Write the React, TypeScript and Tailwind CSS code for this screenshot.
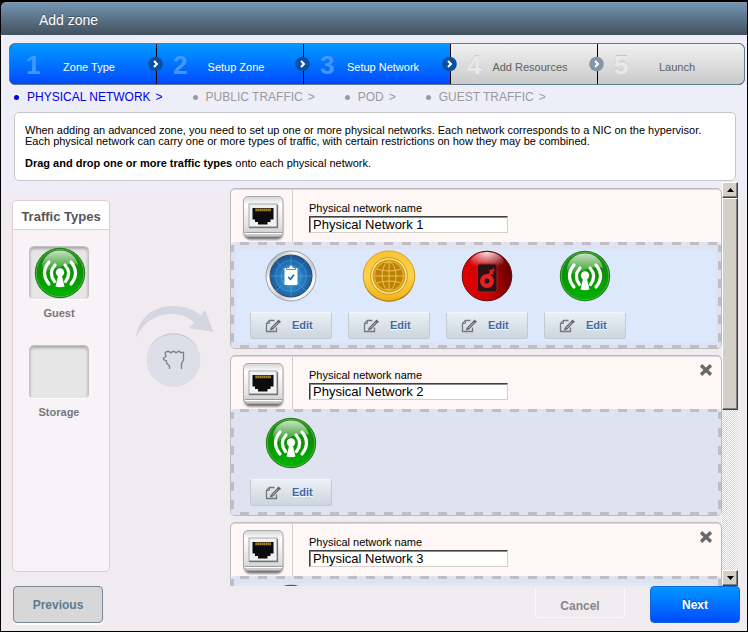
import { useState } from "react";
import clsx from "clsx";

type TrafficType = "management" | "public" | "storage" | "guest";

interface PhysicalNetwork {
  id: number;
  name: string;
  active: boolean;
  removable: boolean;
  traffic: TrafficType[];
}

const STEPS = ["Zone Type", "Setup Zone", "Setup Network", "Add Resources", "Launch"];
const CURRENT_STEP = 2;

const SUB_STEPS = ["PHYSICAL NETWORK", "PUBLIC TRAFFIC", "POD", "GUEST TRAFFIC"];

const INITIAL_NETWORKS: PhysicalNetwork[] = [
  {
    id: 1,
    name: "Physical Network 1",
    active: true,
    removable: false,
    traffic: ["management", "public", "storage", "guest"],
  },
  { id: 2, name: "Physical Network 2", active: false, removable: true, traffic: ["guest"] },
  { id: 3, name: "Physical Network 3", active: true, removable: true, traffic: ["guest"] },
];

function GuestIcon() {
  return (
    <svg viewBox="0 0 52 52" className="block size-[52px]" aria-hidden="true">
      <defs>
        <linearGradient id="guest-fill" x1="0" y1="0" x2="0" y2="1">
          <stop offset="0" stopColor="#1f8a12" />
          <stop offset="0.5" stopColor="#0a9400" />
          <stop offset="1" stopColor="#00b400" />
        </linearGradient>
        <linearGradient id="guest-shine" x1="0" y1="0" x2="0" y2="1">
          <stop offset="0" stopColor="#ffffff" stopOpacity="0.75" />
          <stop offset="1" stopColor="#ffffff" stopOpacity="0.08" />
        </linearGradient>
      </defs>
      <circle cx="26" cy="26" r="25.2" fill="#1c7a12" />
      <circle cx="26" cy="26" r="23.8" fill="url(#guest-fill)" stroke="#62b457" strokeWidth="0.8" />
      <path d="M8 18C10 8 18 3.6 26 3.6S42 8 44 18C36 14 20 23 10 25Z" fill="url(#guest-shine)" />
      <g fill="none" stroke="#fff" strokeWidth="3.2" strokeLinecap="round">
        <path d="M15 15Q6 26 15 37" />
        <path d="M21 18Q14 26 20.500 34.500" />
        <path d="M37 15Q46 26 37 37" />
        <path d="M31 18Q38 26 31.500 34.500" />
      </g>
      <circle cx="26" cy="25.500" r="4.2" fill="#fff" />
      <path d="M24.500 27H27.500L30.500 39.500Q26 41 21.500 39.500Z" fill="#fff" />
    </svg>
  );
}

function ManagementIcon() {
  return (
    <svg viewBox="0 0 52 52" className="block size-[52px]" aria-hidden="true">
      <defs>
        <linearGradient id="mgmt-ring" x1="0" y1="0" x2="1" y2="1">
          <stop offset="0" stopColor="#777b80" />
          <stop offset="0.3" stopColor="#fafafa" />
          <stop offset="0.6" stopColor="#c9cbd0" />
          <stop offset="0.8" stopColor="#ffffff" />
          <stop offset="1" stopColor="#6c6f74" />
        </linearGradient>
        <radialGradient id="mgmt-fill" cx="0.5" cy="0.55" r="0.55">
          <stop offset="0" stopColor="#3a9fdb" />
          <stop offset="0.6" stopColor="#2574b8" />
          <stop offset="1" stopColor="#175391" />
        </radialGradient>
      </defs>
      <circle cx="26" cy="26" r="25" fill="url(#mgmt-ring)" stroke="#8a8e93" strokeWidth="0.8" />
      <circle cx="26" cy="26" r="21" fill="url(#mgmt-fill)" stroke="#31445c" strokeWidth="1" />
      <g fill="none" stroke="#6bc2ee" strokeWidth="0.6" opacity="0.6">
        <circle cx="26" cy="26" r="10" />
        <circle cx="26" cy="26" r="15.500" />
        <path d="M26 5V47M5 26H47M11 11L41 41M41 11L11 41" />
      </g>
      <rect x="19.500" y="18" width="13" height="17" rx="0.8" fill="#fff" />
      <path d="M21.500 19.500V17.500H24Q24 15 26 15T28 17.500H30.500V19.500Z" fill="#fff" stroke="#2c78b9" strokeWidth="0.8" />
      <path d="M23.300 27L25.500 29.300L29 24.800" fill="none" stroke="#1c68ad" strokeWidth="1.7" />
    </svg>
  );
}

function PublicIcon() {
  return (
    <svg viewBox="0 0 54 52" className="block h-[52px] w-[54px]" aria-hidden="true">
      <defs>
        <linearGradient id="public-fill" x1="0" y1="0" x2="0" y2="1">
          <stop offset="0" stopColor="#f8c233" />
          <stop offset="0.5" stopColor="#ffd24c" />
          <stop offset="1" stopColor="#f0b21c" />
        </linearGradient>
      </defs>
      <ellipse cx="27" cy="26.500" rx="26" ry="25.300" fill="#9a6d07" />
      <ellipse cx="27" cy="25.700" rx="25.800" ry="24.900" fill="url(#public-fill)" stroke="#d69b12" strokeWidth="0.8" />
      <circle cx="27" cy="26" r="18.300" fill="#fff0a0" stroke="#cc9313" strokeWidth="1" />
      <circle cx="27" cy="26" r="16.500" fill="#d49b13" />
      <circle cx="27" cy="26" r="14.500" fill="#bd8107" stroke="#f0c348" strokeWidth="0.8" />
      <g fill="none" stroke="#f7d05a" strokeWidth="0.8">
        <path d="M27 12V40M13 26H41M15 19Q27 23 39 19M15 33Q27 29 39 33" />
        <ellipse cx="27" cy="26" rx="7" ry="14" />
      </g>
    </svg>
  );
}

function StorageIcon() {
  return (
    <svg viewBox="0 0 52 52" className="block size-[52px]" aria-hidden="true">
      <defs>
        <linearGradient id="storage-fill" x1="0" y1="0.6" x2="1" y2="0.4">
          <stop offset="0" stopColor="#e60000" />
          <stop offset="0.5" stopColor="#c80000" />
          <stop offset="1" stopColor="#5e0000" />
        </linearGradient>
        <radialGradient id="storage-shine" cx="0.5" cy="0" r="0.75">
          <stop offset="0" stopColor="#fff" stopOpacity="0.9" />
          <stop offset="1" stopColor="#fff" stopOpacity="0" />
        </radialGradient>
      </defs>
      <circle cx="26" cy="26" r="24.800" fill="url(#storage-fill)" stroke="#640a0a" strokeWidth="1" />
      <ellipse cx="26" cy="13" rx="17" ry="11" fill="url(#storage-shine)" />
      <rect x="16.500" y="14" width="19.500" height="28" rx="2.500" fill="#2c1013" stroke="#8e2a2a" strokeWidth="1" />
      <circle cx="26" cy="31" r="7" fill="#e32222" />
      <circle cx="26" cy="31" r="2.500" fill="#2c1013" />
      <path d="M27.500 25.500L33 19M29 20L32 24.500" stroke="#e32222" strokeWidth="2" fill="none" />
    </svg>
  );
}

const TRAFFIC_ICONS: Record<TrafficType, () => React.JSX.Element> = {
  management: ManagementIcon,
  public: PublicIcon,
  storage: StorageIcon,
  guest: GuestIcon,
};

function PortIcon() {
  return (
    <svg viewBox="0 0 44 48" className="block h-12 w-11" aria-hidden="true">
      <defs>
        <linearGradient id="port-frame" x1="0" y1="0" x2="0" y2="1">
          <stop offset="0" stopColor="#d2d2d3" />
          <stop offset="0.2" stopColor="#ffffff" />
          <stop offset="0.8" stopColor="#dededf" />
          <stop offset="1" stopColor="#c4c4c6" />
        </linearGradient>
        <filter id="port-blur" x="-20%" y="-20%" width="140%" height="140%">
          <feGaussianBlur stdDeviation="1.3" />
        </filter>
      </defs>
      <rect x="3.500" y="6" width="38" height="38.500" rx="5" fill="#5a5558" opacity="0.85" filter="url(#port-blur)" />
      <rect x="2.500" y="1.500" width="39.500" height="40" rx="4.500" fill="url(#port-frame)" stroke="#a9a9ab" strokeWidth="1" />
      <path d="M4 37.500H41" stroke="#8f8f92" strokeWidth="0.8" />
      <path d="M4 38.500H41" stroke="#fff" strokeWidth="1" />
      <rect x="8" y="9" width="28" height="23" fill="#f0f0f1" stroke="#a8a8ab" strokeWidth="1" />
      <path d="M8 32.500H36.500V10" fill="none" stroke="#77777b" strokeWidth="1.300" />
      <path d="M11.500 13H32.500V24.500H29.500V27H26.500V29.500H17V27H14V24.500H11.500Z" fill="#0c0c0e" />
      <path d="M14.500 14.800H30" stroke="#e0b53e" strokeWidth="2.800" strokeDasharray="1.200 0.800" />
    </svg>
  );
}

function EditIcon() {
  return (
    <svg viewBox="0 0 17 14" className="block h-3.5 w-[17px]" fill="none" aria-hidden="true">
      <path d="M9.500 1.500H4.500L1.500 4.500V12.500H11.500V8.500" stroke="#74787c" strokeWidth="1.300" />
      <path d="M4.500 1.500V4.500H1.500" stroke="#74787c" strokeWidth="0.900" />
      <path d="M7 9.500L14 2.200" stroke="#5a5e62" strokeWidth="2.800" />
      <path d="M7.500 9L13 3.300" stroke="#d4dae0" strokeWidth="0.900" />
      <path d="M5 11.500L5.800 8.500L8 10.500Z" fill="#5a5e62" />
      <path d="M13 1L15.500 3.200" stroke="#5a5e62" strokeWidth="1.200" />
    </svg>
  );
}

function CloseIcon() {
  return (
    <svg viewBox="0 0 12 12" className="block size-3" aria-hidden="true">
      <path d="M2.300 2.500L9.700 9.500M9.700 2.500L2.300 9.500" stroke="#68696c" strokeWidth="3.400" strokeLinecap="square" />
    </svg>
  );
}

function DragHint() {
  return (
    <svg viewBox="0 0 80 84" className="block h-[84px] w-20" aria-hidden="true">
      <path
        d="M0 33C2 12 18 1 37 1C48 1 58 4.500 65 10.500L69 5L77.500 27L53 23L58.500 17.500C53 12.500 46 9.500 37 9C20 8.500 7 17 0 33Z"
        fill="#d5d6df"
      />
      <circle cx="37.500" cy="55" r="27" fill="#dddee7" />
      <path d="M13 44A27 27 0 0 1 62 44A28 28 0 0 0 13 44Z" fill="#c8cad5" />
      <path
        d="M33.500 64V61L30.500 58V56L27.500 54.500V53L30 51.500L29 48L31 46.500H33L35 48L36.500 46.500H38.500L40 48L42 46.500H43.500L44.500 47.500H47.500V55L45.500 58.500V64"
        fill="none"
        stroke="#7f8186"
        strokeWidth="1.300"
      />
    </svg>
  );
}

function StepArrow({ done }: { done: boolean }) {
  return (
    <svg
      viewBox="0 0 16 16"
      className="absolute -right-2 top-1/2 z-10 size-4 -translate-y-1/2"
      aria-hidden="true"
    >
      <circle cx="7.500" cy="8" r="7.300" fill={done ? "#0b4fa0" : "#8495a6"} />
      <path d="M6 5L9 8L6 11" fill="none" stroke="#fff" strokeWidth="2" />
    </svg>
  );
}

function WizardSteps() {
  return (
    <ol className="mr-0.5 ml-2 flex h-[42px] rounded-md border border-[#5f7b8c] bg-black">
      {STEPS.map((label, i) => {
        const done = i <= CURRENT_STEP;
        const last = i === STEPS.length - 1;
        return (
          <li
            key={label}
            className={clsx(
              "relative flex flex-1 items-center",
              i === 0 && "rounded-l-[5px]",
              last ? "rounded-r-[5px]" : "border-r border-black",
              done
                ? "bg-linear-to-b from-[#0d97ff] to-[#0048ff] text-white"
                : "bg-linear-to-b from-[#f1f1f1] to-[#cbcacb] text-[#5f6164]"
            )}
          >
            <span
              className={clsx(
                "w-8 pt-0.5 pl-4 text-[26px] leading-10 font-bold",
                done ? "text-[#4398ff]" : "text-[#eae8ea] [text-shadow:0_-1px_0_#c9c4c6]"
              )}
            >
              {i + 1}
            </span>
            <span className="flex-1 pt-1.5 pr-5 text-center text-[11px] whitespace-nowrap">
              {label}
            </span>
            {!last && <StepArrow done={done} />}
          </li>
        );
      })}
    </ol>
  );
}

function SubSteps() {
  return (
    <ul className="flex gap-[29px] px-3 pt-1 text-xs whitespace-nowrap">
      {SUB_STEPS.map((label, i) => (
        <li
          key={label}
          className={clsx("flex items-center", i === 0 ? "text-[#0000e8]" : "text-[#9a9a9c]")}
        >
          <span className="mr-2 ml-px size-[5px] rounded-full bg-current" />
          <span>{label}</span>
          <span className="ml-[5px]">&gt;</span>
        </li>
      ))}
    </ul>
  );
}

function TrafficItem({ type }: { type: TrafficType }) {
  const Icon = TRAFFIC_ICONS[type];
  return (
    <li className="flex w-[82px] flex-col items-center gap-[10px]">
      <Icon />
      <button
        type="button"
        className="flex h-[27px] w-full items-center rounded-[3px] border border-[#c6cacf] border-t-[#f4f7fa] bg-linear-to-b from-[#ebf0f4] to-[#ccd6de] pl-3.5 text-[11px] font-bold text-[#3f69a8] [text-shadow:0_1px_0_#fff]"
      >
        <EditIcon />
        <span className="ml-2.5">Edit</span>
      </button>
    </li>
  );
}

interface NetworkCardProps {
  network: PhysicalNetwork;
  onRename: (name: string) => void;
  onRemove: () => void;
}

function NetworkCard({ network, onRename, onRemove }: NetworkCardProps) {
  const inputId = `network-name-${network.id}`;

  return (
    <section className="shrink-0 rounded-[5px] border border-[#bdbbbf] bg-[#fff6f6] shadow-[inset_0_1px_0_#dcd7da]">
      <div className="flex h-[53px]">
        <div className="flex w-[62px] justify-center border-r border-[#d3cccf] pt-1.5 pl-0.5">
          <PortIcon />
        </div>
        <div className="flex-1 pt-3 pl-4">
          <label htmlFor={inputId} className="block text-[11px] leading-[15px] text-black">
            Physical network name
          </label>
          <input
            id={inputId}
            type="text"
            value={network.name}
            onChange={(e) => onRename(e.target.value)}
            className="block h-[17px] w-[199px] border border-[#d4d0c8] border-t-[#404040] border-l-[#404040] bg-white px-[3px] text-[13px] leading-[15px] text-black shadow-[inset_1px_1px_0_#8a8a8a] outline-none"
          />
        </div>
        {network.removable && (
          <button
            type="button"
            aria-label="Remove physical network"
            onClick={onRemove}
            className="mt-2 mr-[9px] size-3"
          >
            <CloseIcon />
          </button>
        )}
      </div>

      {/* Drop zone, outlined by 9px dashes */}
      <div className="rounded-[4px] bg-[#dfe2ef] bg-[repeating-linear-gradient(90deg,#dfe2ef_0_9px,#bfbec6_9px_18px)] py-[3px]">
        <div className="bg-[repeating-linear-gradient(180deg,#bfbec6_0_7px,#dfe2ef_7px_16px,#bfbec6_16px_18px)] px-[3px]">
          <div className="bg-[#dfe2ef] px-0.5 pt-1 pb-0.5">
            <ul
              className={clsx(
                "flex h-[94px] gap-4 rounded-md px-3.5 pt-px",
                network.active && "bg-[#dce9fd]"
              )}
            >
              {network.traffic.map((type) => (
                <TrafficItem key={type} type={type} />
              ))}
            </ul>
          </div>
        </div>
      </div>
    </section>
  );
}

function TrafficSlot({ label, children }: { label: string; children?: React.ReactNode }) {
  return (
    <li className="flex flex-col items-center">
      <div className="flex h-[54px] w-[60px] items-center justify-center rounded-[5px] border border-[#c5c1c3] border-b-white bg-[#e6e6e7] pl-0.5 shadow-[inset_0_2px_3px_#a9a7a9]">
        {children}
      </div>
      <p className="mt-[5px] text-[11px] leading-4 font-bold text-[#77777b]">{label}</p>
    </li>
  );
}

function ScrollBar() {
  const arrowButton =
    "flex h-4 shrink-0 items-center justify-center border border-white border-r-[#404040] border-b-[#404040] bg-[#d4d0c8] shadow-[inset_-1px_-1px_0_#808080]";

  return (
    <div className="flex w-4 flex-col bg-[repeating-conic-gradient(#d6d3cc_0_25%,#ffffff_0_50%)] bg-[size:2px_2px]">
      <button type="button" aria-label="Scroll up" className={arrowButton}>
        <svg viewBox="0 0 7 4" className="h-1 w-[7px]" aria-hidden="true">
          <path d="M0 4L3.500 0L7 4Z" fill="#000" />
        </svg>
      </button>
      <div className="min-h-0 flex-1">
        <div className="h-[57%] border border-white border-r-[#404040] border-b-[#404040] bg-[#d4d0c8] shadow-[inset_-1px_-1px_0_#808080]" />
      </div>
      <button type="button" aria-label="Scroll down" className={arrowButton}>
        <svg viewBox="0 0 7 4" className="h-1 w-[7px]" aria-hidden="true">
          <path d="M0 0L3.500 4L7 0Z" fill="#000" />
        </svg>
      </button>
    </div>
  );
}

export default function App() {
  const [networks, setNetworks] = useState<PhysicalNetwork[]>(INITIAL_NETWORKS);

  function handleRename(id: number, name: string) {
    setNetworks((prev) => prev.map((n) => (n.id === id ? { ...n, name } : n)));
  }

  function handleRemove(id: number) {
    setNetworks((prev) => prev.filter((n) => n.id !== id));
  }

  return (
    <div className="flex h-screen flex-col bg-black px-px pt-0.5 pb-px font-['Liberation_Sans',Arial,sans-serif]">
      <header className="flex h-[33px] shrink-0 items-center rounded-tl-[5px] border-t border-[#8b98a5] bg-linear-to-b from-[#7395b3] to-[#43515e] pt-0.5 pl-[38px]">
        <h1 className="text-sm text-white [text-shadow:0_-1px_1px_#3c4a56]">Add zone</h1>
      </header>

      <div className="flex min-h-0 flex-1 flex-col bg-[#f0ebee] bg-linear-to-b from-[#eeeef8] from-25% to-[#f0ebee] to-30% pt-2">
        <WizardSteps />
        <SubSteps />

        {/* Description */}
        <div className="mt-[7px] mr-[11px] ml-[13px] rounded-[5px] border border-[#c6c6c9] bg-white px-2.5 pt-3 pb-[11px] text-[11px] leading-[11px] text-black">
          <p>
            When adding an advanced zone, you need to set up one or more physical networks. Each
            network corresponds to a NIC on the hypervisor.
            <br />
            Each physical network can carry one or more types of traffic, with certain restrictions
            on how they may be combined.
          </p>
          <p className="mt-[11px]">
            <strong>Drag and drop one or more traffic types</strong> onto each physical network.
          </p>
        </div>

        <main className="mt-px flex min-h-0 flex-1 pr-[9px] pl-[11px]">
          {/* Traffic types */}
          <aside className="mt-[18px] mb-3.5 w-[98px] rounded-[5px] border border-[#e0cdd2] bg-[#f7f3f7]">
            <h2 className="rounded-t-[4px] border-b border-[#e0cdd2] bg-white pt-1 text-center text-[13px] leading-6 font-bold whitespace-nowrap text-[#55565a]">
              Traffic Types
            </h2>
            <ul className="flex flex-col gap-6 pt-4 pr-1">
              <TrafficSlot label="Guest">
                <GuestIcon />
              </TrafficSlot>
              <TrafficSlot label="Storage" />
            </ul>
          </aside>

          <div className="flex w-[120px] justify-end pt-[123px] pr-3.5">
            <DragHint />
          </div>

          {/* Physical networks */}
          <div className="flex min-w-0 flex-1 flex-col gap-1.5 overflow-y-auto pt-1.5 [scrollbar-width:none]">
            {networks.map((network) => (
              <NetworkCard
                key={network.id}
                network={network}
                onRename={(name) => handleRename(network.id, name)}
                onRemove={() => handleRemove(network.id)}
              />
            ))}
          </div>
          <ScrollBar />
        </main>

        <footer className="flex h-[45px] shrink-0 items-start pr-[7px] pl-3 text-xs font-bold">
          <button
            type="button"
            className="h-[37px] w-[90px] rounded-[4px] border border-[#7b8894] bg-[#d7d7d8] text-[#5d7b90] shadow-[0_2px_0_#fbfafc]"
          >
            Previous
          </button>
          <button
            type="button"
            className="mr-[25px] ml-auto h-8 w-[90px] rounded-[3px] border border-t-0 border-[#faf7fa] pt-2 text-[#86868a]"
          >
            Cancel
          </button>
          <button
            type="button"
            className="h-[37px] w-[90px] rounded-[4px] border border-[#0c68d8] bg-linear-to-b from-[#0d95ff] to-[#0048ff] text-white [text-shadow:0_-1px_1px_#084ba8]"
          >
            Next
          </button>
        </footer>
      </div>
    </div>
  );
}
